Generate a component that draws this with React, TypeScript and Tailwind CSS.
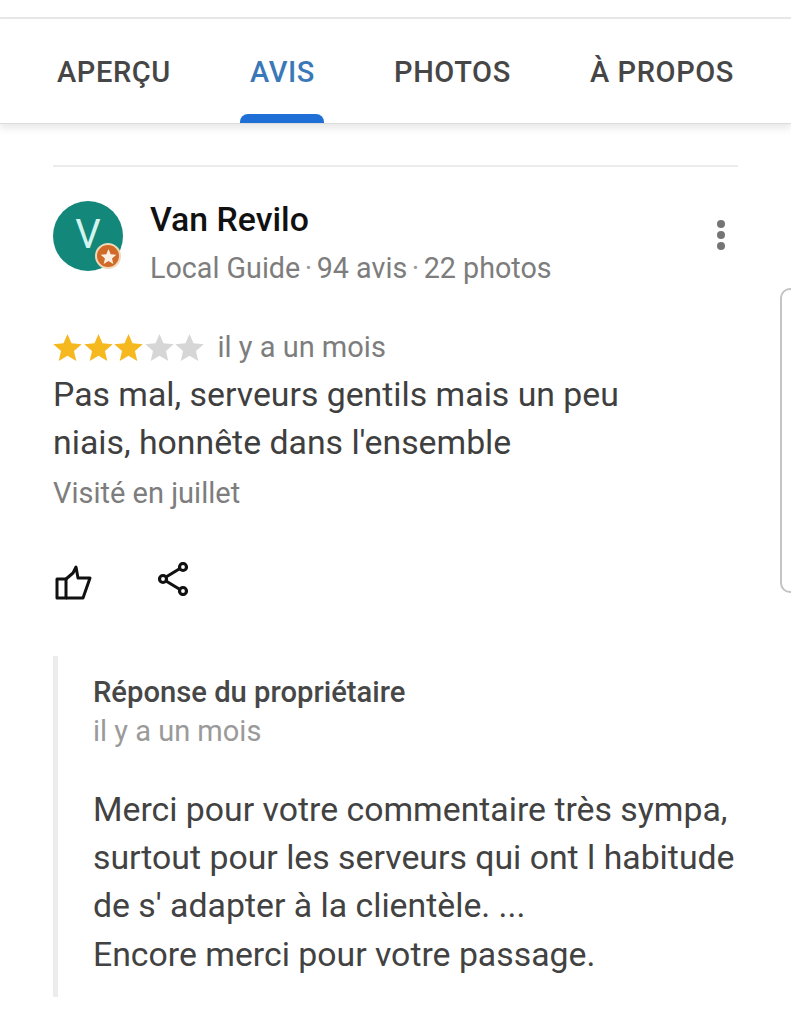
import React from "react";

const tabs = [
  { label: "APERÇU", active: false },
  { label: "AVIS", active: true },
  { label: "PHOTOS", active: false },
  { label: "À PROPOS", active: false },
];

const Star: React.FC<{ className: string; size?: number }> = ({ className, size = 30 }) => (
  <svg viewBox="0 0 24 24" width={size} height={size} className={className} fill="currentColor">
    <path d="M12 1.5l3.1 7.3 7.9.7-6 5.2 1.8 7.800L12 18.300l-6.800 4.200 1.800-7.800-6-5.200 7.900-.7z" />
  </svg>
);

const Sep = () => <span className="mx-[4.500px] text-[#9a9a9a]">·</span>;

export default function App() {
  return (
    <div className="relative h-[1024px] w-[791px] overflow-hidden bg-white font-['Roboto',sans-serif]">
      <div className="h-[17px]" />
      <div className="h-[2px] bg-[#e9e9e9]" />

      <nav className="flex h-[105px] items-stretch justify-between border-b border-[#dcdcdc] px-[57px] shadow-[0_4px_8px_rgba(0,0,0,0.1)]">
        {tabs.map((tab) => (
          <div key={tab.label} className="relative flex items-center pt-[3px]">
            <span
              className={
                "text-[29px] font-medium tracking-[0.6px] " +
                (tab.active ? "text-[#3b78b8]" : "text-[#464646]")
              }
            >
              {tab.label}
            </span>
            {tab.active && (
              <div className="absolute bottom-0 left-1/2 h-[9px] w-[84px] -translate-x-1/2 rounded-t-[8px] bg-[#1f6fd6]" />
            )}
          </div>
        ))}
      </nav>

      <main className="px-[53px] pt-[41px]">
        <div className="h-[2px] w-[685px] bg-[#ececec]" />

        <div className="mt-[34px] flex items-start">
          <div className="relative h-[70px] w-[70px] shrink-0">
            <div className="flex h-[70px] w-[70px] items-center justify-center rounded-full bg-[#12877a] pb-[2px] text-[40px] text-[#d4f5ef]">
              V
            </div>
            <div className="absolute left-[42px] top-[42px] flex h-[26px] w-[26px] items-center justify-center rounded-full border-2 border-[#f0d8b8] bg-[#d06a28]">
              <Star className="text-[#fbeee2]" size={17} />
            </div>
          </div>

          <div className="ml-[27px] flex-1 pt-[1px]">
            <div className="text-[33.800px] font-medium leading-[36px] text-[#111111]">Van Revilo</div>
            <div className="mt-[14px] text-[28.700px] leading-[32px] text-[#7d7d7d]">
              Local Guide
              <Sep />
              94 avis
              <Sep />
              22 photos
            </div>
          </div>

          <div className="mr-[13px] mt-[19px] flex flex-col gap-[3px]">
            <div className="h-[8px] w-[8px] rounded-full bg-[#757575]" />
            <div className="h-[8px] w-[8px] rounded-full bg-[#757575]" />
            <div className="h-[8px] w-[8px] rounded-full bg-[#757575]" />
          </div>
        </div>

        <div className="mt-[47px] flex items-center">
          <div className="-ml-[1px] flex">
            {[0, 1, 2, 3, 4].map((i) => (
              <Star
                key={i}
                size={31}
                className={"-mr-[0.5px] " + (i < 3 ? "text-[#f5b81f]" : "text-[#d6d6d6]")}
              />
            ))}
          </div>
          <span className="ml-[13px] text-[29px] leading-[32px] text-[#7d7d7d]">il y a un mois</span>
        </div>

        <p className="mt-[8px] text-[33.800px] leading-[47.500px] text-[#3f3f3f]">
          Pas mal, serveurs gentils mais un peu
          <br />
          niais, honnête dans l'ensemble
        </p>
        <div className="mt-[11px] text-[29px] leading-[32px] text-[#7d7d7d]">Visité en juillet</div>

        <div className="mt-[53px] flex items-start pl-[2px]">
          <svg className="mt-[2px]" viewBox="0 0 37 36" width={37} height={36} fill="none" stroke="#111" strokeWidth={3} strokeLinejoin="round">
            <path d="M2 15h9v19h-9z" />
            <path d="M11 15l7-6 3-6 2 11h12l-7 20h-17" />
          </svg>
          <svg className="ml-[66px]" viewBox="0 0 32 34" width={32} height={34} fill="none" stroke="#111" strokeWidth={3.2}>
            <circle cx="25" cy="5" r="3.500" />
            <circle cx="5" cy="17" r="3.500" />
            <circle cx="25" cy="29" r="3.500" />
            <path d="M8 15l14-8.500M8 19l14 8.500" />
          </svg>
        </div>

        <div className="mt-[56px] border-l-[5px] border-[#ececec] pb-[18px] pl-[35px]">
          <div className="pt-[20px] text-[29.200px] font-medium leading-[32px] text-[#474747]">
            Réponse du propriétaire
          </div>
          <div className="mt-[7px] text-[29px] leading-[32px] text-[#9a9a9a]">il y a un mois</div>
          <p className="mt-[39px] text-[33.800px] leading-[48.200px] text-[#424242]">
            Merci pour votre commentaire très sympa,
            <br />
            surtout pour les serveurs qui ont l habitude
            <br />
            de s' adapter à la clientèle. ...
            <br />
            Encore merci pour votre passage.
          </p>
        </div>
      </main>

      {/* bord du panneau qui dépasse à droite */}
      <div className="absolute left-[780px] top-[288px] h-[305px] w-[20px] rounded-l-[10px] border-2 border-[#c4c4c4]" />
    </div>
  );
}
